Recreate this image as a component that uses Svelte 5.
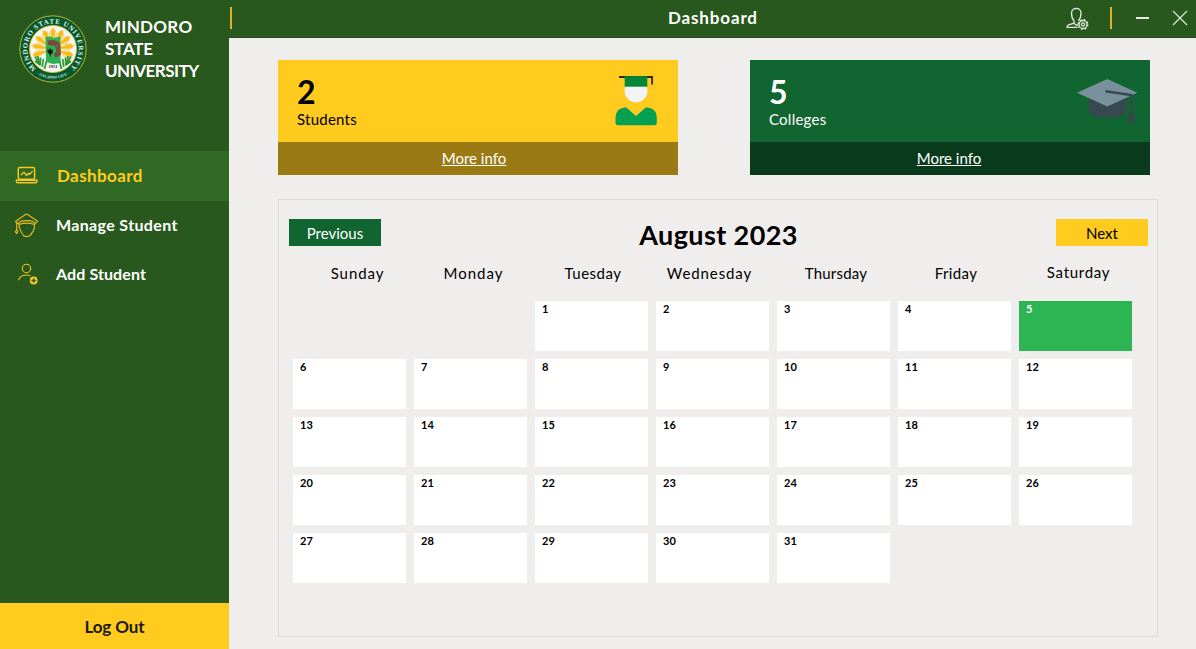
<script>
  const weekdays = ['Sunday', 'Monday', 'Tuesday', 'Wednesday', 'Thursday', 'Friday', 'Saturday'];
  const days = Array.from({ length: 31 }, (_, i) => i + 1);
  const today = 5;
  const rays = Array.from({ length: 9 }, (_, i) => -108 + i * 27);
</script>

<div class="app">
  <aside>
    <div class="brand">
      <svg width="70" height="70" viewBox="0 0 70 70">
        <circle cx="35" cy="35" r="33.2" fill="#045a2e" stroke="#c9b32c" stroke-width="1" />
        <circle cx="35" cy="35" r="23.5" fill="#f6f6f0" stroke="#d9c23a" stroke-width=".9" />
        <defs>
          <path id="ring-top" d="M18.3 54.5 A25.6 25.6 0 1 1 51.7 54.5" />
          <path id="ring-bottom" d="M16 57.9 A30.5 30.5 0 0 0 54 57.9" />
        </defs>
        <text class="seal"><textPath href="#ring-top" textLength="123">MINDORO STATE UNIVERSITY</textPath></text>
        <text class="seal small"><textPath href="#ring-bottom" startOffset="50%" text-anchor="middle">· CALAPAN CITY ·</textPath></text>
        {#each rays as a}
          <path d="M34.2 28 L32.3 17 L35 13.600 L37.7 17 L35.800 28Z" fill="#fbbd1d" transform="rotate({a} 35 35)" />
          <path d="M34.800 28 L34.400 18.500 L35.500 18.500Z" fill="#fbbd1d" transform="rotate({a + 13.5} 35 35)" />
        {/each}
        <path d="M16 42 Q22 53 33 57 L37 57 Q48 53 54 42 L45 47 L35 52 L25 47Z" fill="#f6f6f0" />
        <path d="M27.500 23 L33 22.500 35 24 42.500 22.500 V49 L35 50 28 48Z" fill="#2eb056" />
        <path d="M29.500 26.500 L36 26 Q43 27.500 42.500 34 L42.800 41 L37.500 43.500 L35.500 40 L38.500 37 L37 32 L30 31Z" fill="#7d4a37" />
        <path d="M38 30.500 l2.500 1 -1 2.500z" fill="#2487c8" />
        <path d="M29.500 34.500 l1.500 2 1-3.500 1 3.500 2-1.500 -.6 4.500 -1.700 1 .3 3.500 -2-4.500 -1.500-1z" fill="#101810" />
        <g stroke="#2b9a35" stroke-width="1.700" fill="none">
          <path d="M17 42.500l3.500 6M20 42l1 8M22.500 43.500l-.2 8M25.300 45l-1 8M28.500 47l-2 8M17 47l5 4M53 42.500l-3.500 6M50 42l-1 8M47.500 43.500l.2 8M44.700 45l1 8M41.500 47l2 8M53 47l-5 4" />
        </g>
        <text class="year" x="35" y="54.300" text-anchor="middle">1951</text>
      </svg>
      <h1><span>MINDORO</span><span>STATE</span><span>UNIVERSITY</span></h1>
    </div>
    <nav>
      <a class="active">
        <svg width="24" height="24" viewBox="0 0 24 24" fill="none" stroke="#f9c820" stroke-width="1.500" stroke-linejoin="round" stroke-linecap="round">
          <rect x="4.300" y="4.500" width="16.300" height="11.700" rx="1.500" />
          <path d="M2.300 17.200h20.700v1q0 1.600-1.500 1.600H3.800q-1.500 0-1.500-1.600zM7.300 11.700l2.700-2.500 2.500 3.300 2.200-2.300 1 1.200 2.600-3" stroke-width="1.400" />
        </svg>
        <span class="t-dash">Dashboard</span>
      </a>
      <a>
        <svg width="24" height="24" viewBox="0 0 24 24" fill="none" stroke="#e9bd20" stroke-width="1.100" stroke-linejoin="round">
          <path d="M1.300 8.500L11.800 1.200Q12.500 .9 13.300 1.200L23.500 8.300 20.700 11.200M1.300 8.500l4 2.800M5 15V10.200Q5.200 7.700 12.500 7.600t8 2.600V14Q19.700 19 16 22.500 12.500 24.500 9.500 22.500 6 18.500 5 13M5 11.500q7.500-2.800 15.500 0M2.700 9.500v8" />
          <path d="M2.700 16.800l-1.400 2 1.400 1.800 1.200-1.800z" />
        </svg>
        <span class="t-manage">Manage Student</span>
      </a>
      <a>
        <svg width="24" height="24" viewBox="0 0 24 24" fill="none" stroke="#f3c31f" stroke-width="1.100" stroke-linecap="round">
          <circle cx="12.500" cy="6.500" r="4.200" />
          <path d="M4.700 17.700Q6.500 13 12.500 13q2.500 0 3.300.7" />
          <circle cx="19.700" cy="18.500" r="3.900" fill="#f9c820" stroke="none" />
          <path d="M17.900 18.500h3.600M19.700 16.700v3.600" stroke="#28581d" stroke-width="1.300" />
        </svg>
        <span class="t-add">Add Student</span>
      </a>
    </nav>
    <button class="logout">Log Out</button>
  </aside>

  <div class="main">
    <header>
      <i class="bar"></i>
      <h2>Dashboard</h2>
      <div class="tools">
        <svg width="24" height="24" viewBox="0 0 24 24" fill="none" stroke="#dfe8dc" stroke-width="1.300">
          <path d="M8 13.800Q5.300 10.800 5.500 6 6 1.400 10.300 1.300 14.700 1.400 15 6q.2 4.500-2.600 7.800M8 13.800v2.400L2 18.200Q1 19 1 20.400h10.500M8 16.200l2.500 2.200 1.500-1.200" />
          <circle cx="17" cy="17.500" r="4" />
          <circle cx="17" cy="17.500" r="4.800" stroke-dasharray="1.900 1.870" stroke-width="1.300" />
          <circle cx="17" cy="17.500" r="1.600" />
        </svg>
        <i class="bar"></i>
        <i class="min"></i>
        <svg class="close" width="16" height="16" viewBox="0 0 16 16" stroke="#e6ece4" stroke-width="1.100"><path d="M1 1l14 14M15 1L1 15" /></svg>
      </div>
    </header>

    <section class="cards">
      <article class="students">
        <div class="top">
          <div><strong>2</strong><p>Students</p></div>
          <svg width="44" height="52" viewBox="0 0 44 52">
            <circle cx="22" cy="15.800" r="11.500" fill="#f3f3f3" />
            <path d="M5 1h34v8.500h-1.800V3H5z" fill="#30270d" />
            <path d="M10.700 1.200h22.600v10.500H10.700z" fill="#048638" />
            <path d="M1.500 48v-6Q2 33 12 32.200L22 41l10-8.800Q42.500 33 42.800 42v6q0 2.300-2.500 2.300H4q-2.500 0-2.500-2.300z" fill="#05a052" />
          </svg>
        </div>
        <a>More info</a>
      </article>
      <article class="colleges">
        <div class="top">
          <div><strong>5</strong><p>Colleges</p></div>
          <svg width="62" height="50" viewBox="0 0 62 50">
            <path d="M12.700 18h37.300v16.500Q47 39.500 31.300 39.500T12.700 34z" fill="#374850" />
            <path d="M1 14.700L31.300 1 61.300 14.700 31.300 28.500z" fill="#78919d" />
            <path d="M29.500 13.200L55.300 17v20" fill="none" stroke="#374850" stroke-width="2.400" />
            <path d="M54.500 33.500h1.500l2.900 7.500-3.600 6.300-3.600-6.300z" fill="#37474f" />
          </svg>
        </div>
        <a>More info</a>
      </article>
    </section>

    <section class="calendar">
      <div class="cal-head">
        <button class="prev">Previous</button>
        <h3>August 2023</h3>
        <button class="next">Next</button>
      </div>
      <div class="weekdays">
        {#each weekdays as w}<span>{w}</span>{/each}
      </div>
      <div class="grid">
        {#each days as d}
          <div class="day" class:today={d === today}>{d}</div>
        {/each}
      </div>
    </section>
  </div>
</div>

<style>
  :global(body) { margin: 0; }
  * { box-sizing: border-box; }
  .app { display: flex; width: 1196px; height: 649px; overflow: hidden; background: #efeeec; color: #000; font-family: "Century Gothic", Lato, sans-serif; font-size: 15px; }
  h1, h2, h3, p { margin: 0; }
  button { border: 0; padding: 0; font: inherit; color: inherit; }
  svg { display: block; flex: none; }
  aside { width: 229px; flex: none; background: #28581d; display: flex; flex-direction: column; }
  .brand { height: 151px; display: flex; padding: 14px 0 0 18px; gap: 17px; color: #fff; }
  h1 { font-size: 17px; line-height: 22px; padding-top: 2px; letter-spacing: .3px; }
  h1 span { display: block; }
  h1 span:nth-child(2) { letter-spacing: -.2px; }
  h1 span:nth-child(3) { letter-spacing: -.5px; }
  .seal { font: 700 7px "Liberation Serif", serif; fill: #e4eee6; }
  .seal.small { font-size: 3.800px; }
  .year { font: 700 4.500px "Liberation Serif", serif; fill: #222; }
  nav { flex: 1; }
  nav a { display: flex; align-items: center; height: 49px; padding: 0 0 2px 14px; gap: 18px; color: #fff; font-weight: 700; font-size: 16px; }
  nav a.active { height: 50px; background: #2f6923; color: #ffcb1f; gap: 19px; font-size: 17px; }
  .t-dash { letter-spacing: .4px; }
  .t-manage { letter-spacing: .35px; }
  .t-add { letter-spacing: .1px; }
  nav a:not(.active) span { margin-top: -1px; }
  .logout { height: 46px; background: #ffcb1f; color: #1c1a12; font-weight: 700; font-size: 17px; letter-spacing: -.1px; }
  .main { flex: 1; min-width: 0; }
  header { height: 38px; background: #28581d; border-bottom: 1px solid #234e1a; display: grid; grid-template-columns: 439px 90px 1fr; color: #fff; padding-top: 7px; }
  .bar { width: 2px; height: 22px; background: #dcb422; margin-left: 1px; }
  h2 { font-size: 17px; line-height: 22px; letter-spacing: .85px; white-space: nowrap; }
  .tools { display: flex; padding-left: 308px; }
  .tools .bar { margin-left: 20px; }
  .min { width: 13px; height: 2px; background: #e6ece4; margin: 10px 0 0 24px; }
  .close { margin: 3px 0 0 23px; }
  .cards { display: flex; gap: 72px; padding: 22px 0 0 49px; }
  article { width: 400px; height: 115px; display: flex; flex-direction: column; }
  .top { height: 82px; display: flex; justify-content: space-between; padding: 15px 20px 0 19px; }
  .top strong { display: block; font-size: 32px; line-height: 36px; margin-top: -1px; }
  .top p { line-height: 18px; letter-spacing: .25px; }
  .colleges .top { padding-right: 12px; }
  .colleges .top svg { margin-top: 3px; }
  article > a { flex: 1; color: #fff; text-align: center; text-decoration: underline; line-height: 32px; padding-right: 8px; }
  .colleges > a { padding-right: 2px; }
  .students { background: #ffcb1f; }
  .students > a { background: #9b7a13; }
  .colleges { background: #116530; color: #fff; }
  .colleges > a { background: #0a3a1c; }
  .calendar { width: 880px; height: 438px; margin: 24px 0 0 49px; border: 1px solid #dbdbd9; padding: 19px 9px 0 10px; }
  .cal-head { display: flex; justify-content: space-between; height: 44px; }
  .cal-head button { width: 92px; height: 27px; }
  .cal-head .prev { background: #116530; color: #fff; }
  .cal-head .next { background: #ffcb1f; }
  h3 { font-size: 27px; line-height: 31px; letter-spacing: .4px; }
  .weekdays { display: grid; grid-template-columns: 117px 115px 124px 109px 144px 96px 149px; margin-left: 10px; width: 854px; height: 38px; line-height: 20px; text-align: center; letter-spacing: .2px; }
  .weekdays span:nth-child(1) { letter-spacing: .9px; }
  .weekdays span:nth-child(2) { letter-spacing: 1px; }
  .weekdays span:nth-child(3) { letter-spacing: .5px; }
  .weekdays span:nth-child(4) { letter-spacing: .9px; }
  .weekdays span:nth-child(6) { letter-spacing: .4px; }
  .weekdays span:nth-child(7) { letter-spacing: .7px; margin-top: -1px; }
  .grid { display: grid; grid-template-columns: repeat(7, 113px); grid-auto-rows: 50px; gap: 8px; padding-left: 4px; }
  .day { background: #fff; font-size: 11px; font-weight: 700; line-height: 14px; padding: 1px 7px; letter-spacing: .2px; }
  .day:first-child { grid-column-start: 3; }
  .today { background: #2eb553; color: #fff; }
</style>
